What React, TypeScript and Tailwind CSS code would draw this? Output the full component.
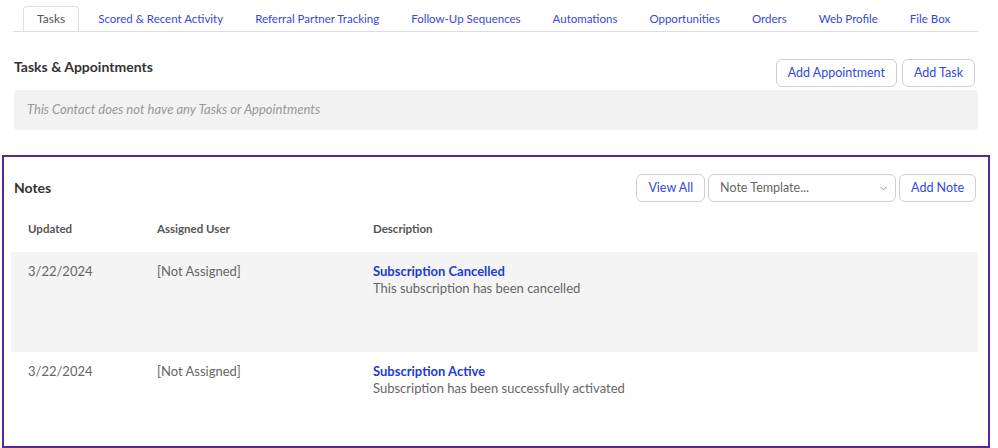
import { ChevronDown } from 'lucide-react'

const tabs = [
  'Scored & Recent Activity',
  'Referral Partner Tracking',
  'Follow-Up Sequences',
  'Automations',
  'Opportunities',
  'Orders',
  'Web Profile',
  'File Box',
]

const notes = [
  {
    updated: '3/22/2024',
    user: '[Not Assigned]',
    title: 'Subscription Cancelled',
    body: 'This subscription has been cancelled',
    shaded: true,
  },
  {
    updated: '3/22/2024',
    user: '[Not Assigned]',
    title: 'Subscription Active',
    body: 'Subscription has been successfully activated',
    shaded: false,
  },
]

function OutlineButton({ label, className = '' }: { label: string; className?: string }) {
  return (
    <button
      className={`h-[28px] px-[11px] rounded-[6px] border border-[#cfcfcf] bg-white text-[12.5px] text-[#3548de] leading-none whitespace-nowrap ${className}`}
    >
      {label}
    </button>
  )
}

export default function App() {
  return (
    <div className="w-[998px] h-[448px] overflow-hidden bg-white font-['Lato',sans-serif]">
      <div className="pl-[13px] pr-[20px] pt-[6px]">
        {/* tab strip */}
        <div className="flex items-end h-[26px] border-b border-[#dedede] pl-[10px]">
          <div className="h-[25px] flex items-center px-[13px] border border-b-0 border-[#dedede] rounded-t-[4px] text-[12px] text-[#555]">
            Tasks
          </div>
          <div className="flex ml-[3px]">
            {tabs.map((t) => (
              <div
                key={t}
                className="h-[25px] flex items-center px-[16px] text-[11.5px] text-[#3548de] whitespace-nowrap"
              >
                {t}
              </div>
            ))}
          </div>
        </div>

        {/* tasks & appointments */}
        <div className="mt-[27px] flex justify-between items-start pl-[1px] pr-[3px]">
          <h2 className="text-[14px] leading-[16px] font-bold text-[#333]">Tasks &amp; Appointments</h2>
          <div className="flex gap-[5px]">
            <OutlineButton label="Add Appointment" />
            <OutlineButton label="Add Task" />
          </div>
        </div>
        <div className="mt-[3px] ml-[1px] h-[40px] rounded-[4px] bg-[#f2f2f2] flex items-center pl-[13px]">
          <span className="italic text-[13px] text-[#999]">This Contact does not have any Tasks or Appointments</span>
        </div>
      </div>

      {/* notes */}
      <div className="ml-[2px] mt-[25px] w-[988px] h-[293px] border-2 border-[#5f2590] pr-[10px]">
        <div className="mt-[17px] flex justify-between items-center pl-[10px] pr-[2px]">
          <h2 className="text-[14px] leading-[16px] font-bold text-[#333]">Notes</h2>
          <div className="flex gap-[3px]">
            <OutlineButton label="View All" />
            <div className="w-[188px] h-[28px] rounded-[6px] border border-[#cfcfcf] flex items-center justify-between pl-[11px] pr-[6px]">
              <span className="text-[12.5px] text-[#666]">Note Template...</span>
              <ChevronDown className="w-[11px] h-[11px] text-[#888]" strokeWidth={2} />
            </div>
            <OutlineButton label="Add Note" />
          </div>
        </div>

        <div className="ml-[7px]">
          <div className="flex pt-[19px] pb-[15px] pl-[17px] text-[11.5px] leading-[16px] font-bold text-[#555]">
            <div className="w-[129px]">Updated</div>
            <div className="w-[216px]">Assigned User</div>
            <div>Description</div>
          </div>
          {notes.map((n, i) => (
            <div
              key={i}
              className={`flex h-[100px] pt-[11px] pl-[17px] text-[13px] leading-[17px] text-[#666] ${n.shaded ? 'bg-[#f4f4f4]' : ''}`}
            >
              <div className="w-[129px]">{n.updated}</div>
              <div className="w-[216px]">{n.user}</div>
              <div>
                <div className="font-bold text-[#1c3bd3]">{n.title}</div>
                <div>{n.body}</div>
              </div>
            </div>
          ))}
        </div>
      </div>
    </div>
  )
}
